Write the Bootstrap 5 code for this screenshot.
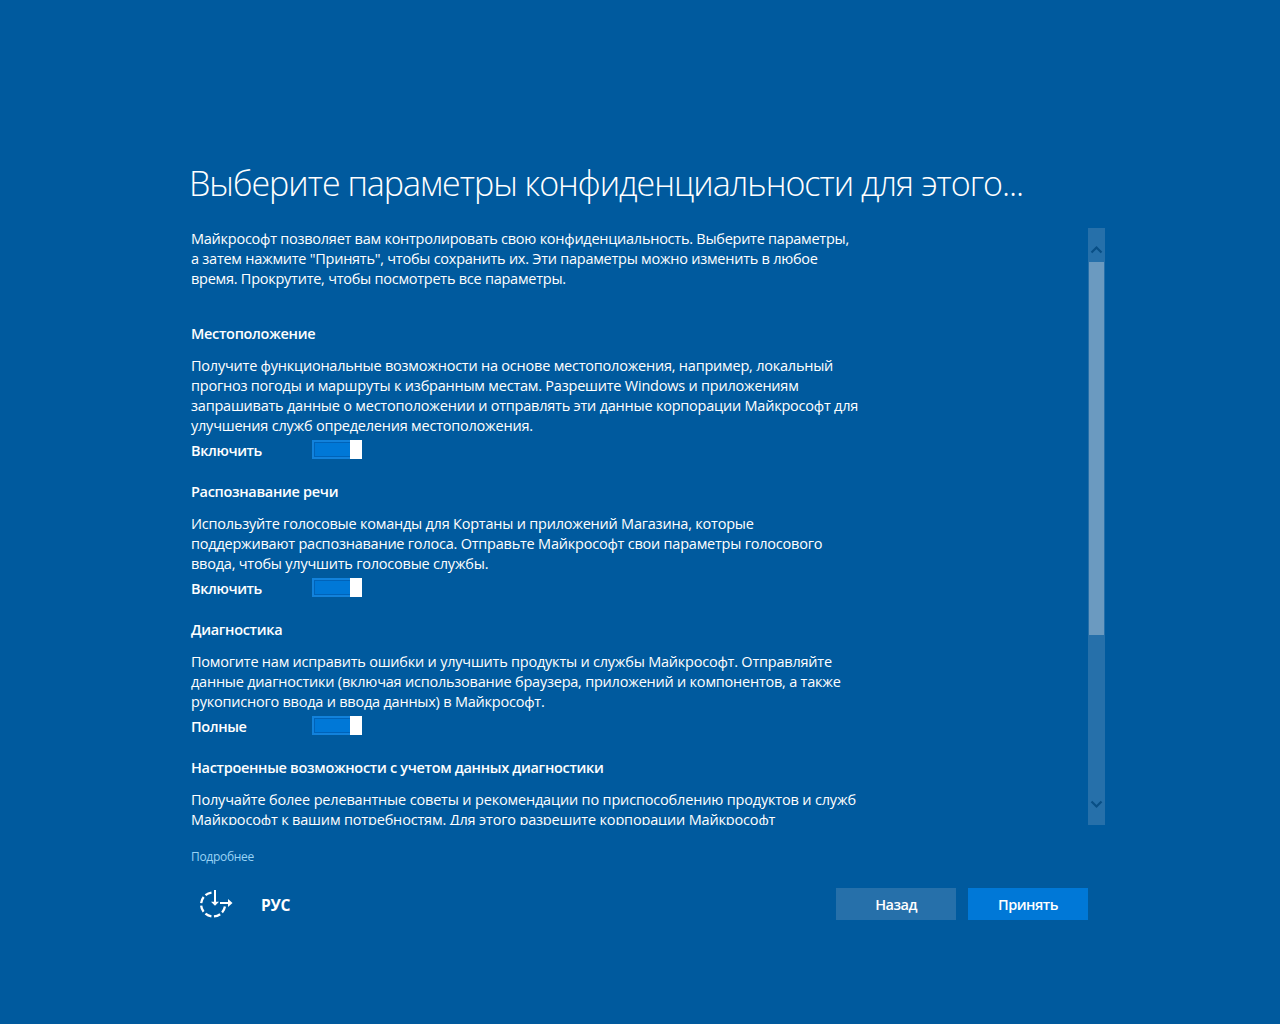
<!DOCTYPE html>
<html lang="ru">
<head>
    <meta charset="UTF-8">
    <meta name="viewport" content="width=device-width, initial-scale=1">
    <title>Параметры конфиденциальности</title>
    <link href="https://cdn.jsdelivr.net/npm/bootstrap@5.3.0/dist/css/bootstrap.min.css" rel="stylesheet">
    <style>
        body { background-color: #005a9e; color: #fff; font-family: "Open Sans", "Noto Sans", sans-serif; font-size: 14.5px; line-height: 20px; }
        .setup { width: 915px; margin-left: 190px; padding-top: 158px; }
        .setup-title { font-size: 34px; font-weight: 300; line-height: 50px; letter-spacing: -1px; margin: 0 0 20px -1px; white-space: nowrap; }
        .settings { height: 597px; }
        .settings-text { padding: 1px 0 0 1px; white-space: nowrap; letter-spacing: -.22px; }
        .intro { margin-bottom: 35px; letter-spacing: -.25px; }
        .option { margin-bottom: 21px; }
        .option:last-child p { letter-spacing: -.17px; }
        .option h2 { font-size: 14.5px; font-weight: 600; line-height: 20px; letter-spacing: -.31px; margin-bottom: 12px; }
        .option p { margin-bottom: 4px; }
        .option-row { height: 21px; }
        .state { width: 121px; padding-top: 1px; font-weight: 600; letter-spacing: -.4px; }
        .toggle { width: 50px; height: 19px; background: #1282dc; padding: 2px 0 2px 2px; }
        .toggle-fill { background: #0078d7; border: 1px solid #0063b9; border-right: 0; }
        .toggle-knob { width: 12px; margin: -2px 0; background: #fff; }
        .scroller { width: 17px; background: #2670aa; }
        .thumb { height: 373px; width: 15px; margin-left: 1px; background: #6b9ac0; }
        .more { font-size: 12px; line-height: 16px; letter-spacing: -.3px; color: #99d3f5; margin: 24px 0 0 1px; }
        .actions { margin-top: 23px; height: 32px; padding-right: 17px; }
        .lang { font-size: 15.5px; font-weight: 700; letter-spacing: -.2px; margin-left: 28px; padding-top: 2px; }
        .setup .btn { width: 120px; height: 32px; padding: 1px 0 0; font-size: 14.5px; font-weight: 600; letter-spacing: -.5px; line-height: 32px; border: 0; border-radius: 0; color: #fff; }
        .btn-back { background: #2670aa; margin-right: 12px; }
        .btn-accept { background: #0078d7; }
    </style>
</head>
<body class="overflow-hidden">
    <main class="setup">
        <h1 class="setup-title">Выберите параметры конфиденциальности для этого...</h1>
        <div class="settings d-flex justify-content-between overflow-hidden">
            <div class="settings-text">
                <p class="intro">Майкрософт позволяет вам контролировать свою конфиденциальность. Выберите параметры,<br>а затем нажмите "Принять", чтобы сохранить их. Эти параметры можно изменить в любое<br>время. Прокрутите, чтобы посмотреть все параметры.</p>
                <section class="option">
                    <h2>Местоположение</h2>
                    <p>Получите функциональные возможности на основе местоположения, например, локальный<br>прогноз погоды и маршруты к избранным местам. Разрешите Windows и приложениям<br>запрашивать данные о местоположении и отправлять эти данные корпорации Майкрософт для<br>улучшения служб определения местоположения.</p>
                    <div class="option-row d-flex">
                        <span class="state">Включить</span>
                        <div class="toggle d-flex" role="switch" aria-checked="true"><div class="toggle-fill flex-fill"></div><div class="toggle-knob"></div></div>
                    </div>
                </section>
                <section class="option">
                    <h2>Распознавание речи</h2>
                    <p>Используйте голосовые команды для Кортаны и приложений Магазина, которые<br>поддерживают распознавание голоса. Отправьте Майкрософт свои параметры голосового<br>ввода, чтобы улучшить голосовые службы.</p>
                    <div class="option-row d-flex">
                        <span class="state">Включить</span>
                        <div class="toggle d-flex" role="switch" aria-checked="true"><div class="toggle-fill flex-fill"></div><div class="toggle-knob"></div></div>
                    </div>
                </section>
                <section class="option">
                    <h2>Диагностика</h2>
                    <p>Помогите нам исправить ошибки и улучшить продукты и службы Майкрософт. Отправляйте<br>данные диагностики (включая использование браузера, приложений и компонентов, а также<br>рукописного ввода и ввода данных) в Майкрософт.</p>
                    <div class="option-row d-flex">
                        <span class="state">Полные</span>
                        <div class="toggle d-flex" role="switch" aria-checked="true"><div class="toggle-fill flex-fill"></div><div class="toggle-knob"></div></div>
                    </div>
                </section>
                <section class="option">
                    <h2>Настроенные возможности с учетом данных диагностики</h2>
                    <p>Получайте более релевантные советы и рекомендации по приспособлению продуктов и служб<br>Майкрософт к вашим потребностям. Для этого разрешите корпорации Майкрософт</p>
                </section>
            </div>
            <div class="scroller d-flex flex-column">
                <svg width="17" height="34"><path d="M3.5 24.5l5-5 5 5" fill="none" stroke="#084f86" stroke-width="2.2"/></svg>
                <div class="thumb"></div>
                <svg class="mt-auto" width="17" height="34"><path d="M3.5 10.5l5 5 5-5" fill="none" stroke="#084f86" stroke-width="2.2"/></svg>
            </div>
        </div>
        <div class="more">Подробнее</div>
        <div class="actions d-flex align-items-center">
            <!-- ease of access -->
            <svg width="43" height="32" fill="none" stroke="#fff">
                <path d="M21.5 4.6A12 12 0 1 0 35 18" stroke-width="2.3" stroke-dasharray="6.6 2.6"/>
                <path d="M25 2v13M30 15h9" stroke-width="2"/>
                <path d="M21 13.7h8l-4 4zM38 11l4.5 4-4.5 4z" fill="#fff" stroke="none"/>
            </svg>
            <span class="lang">РУС</span>
            <button type="button" class="btn btn-back ms-auto">Назад</button>
            <button type="button" class="btn btn-accept">Принять</button>
        </div>
    </main>
    <script src="https://cdn.jsdelivr.net/npm/bootstrap@5.3.0/dist/js/bootstrap.bundle.min.js"></script>
</body>
</html>
